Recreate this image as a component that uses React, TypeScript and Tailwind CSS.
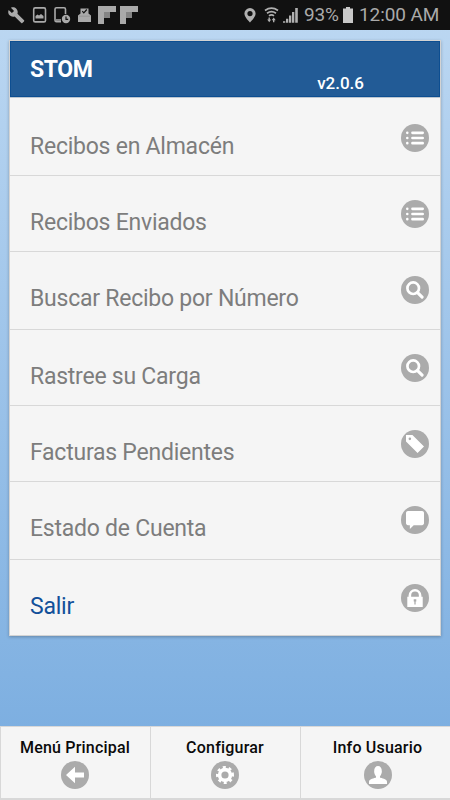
import type { ReactNode } from 'react'

const Disc = ({ children }: { children: ReactNode }) => (
  <span className="flex h-7 w-7 shrink-0 items-center justify-center rounded-full bg-[#ababab]">
    <svg viewBox="0 0 14 14" className="h-[18px] w-[18px]" fill="#fff">
      {children}
    </svg>
  </span>
)

const ListIcon = () => (
  <Disc>
    <path
      d="M5 3H13M5 7H13M5 11H13M1 3H1.01M1 7H1.01M1 11H1.01"
      stroke="#fff"
      strokeWidth="2"
      strokeLinecap="round"
    />
  </Disc>
)

const SearchIcon = () => (
  <Disc>
    <circle cx="5.600" cy="5.600" r="4.500" fill="none" stroke="#fff" strokeWidth="2.100" />
    <path d="M9 9L12.500 12.500" stroke="#fff" strokeWidth="2.400" strokeLinecap="round" />
  </Disc>
)

const TagIcon = () => (
  <Disc>
    <path fillRule="evenodd" d="M5 0H0v5l9 9 5-5L5 0zM3 4a1 1 0 1 1 0-2 1 1 0 0 1 0 2z" />
  </Disc>
)

const CommentIcon = () => (
  <Disc>
    <path d="M12.500 0h-11C.7 0 0 .7 0 1.500v8C0 10.300.7 11 1.500 11H3v3l3-3h6.500c.8 0 1.500-.7 1.500-1.500v-8C14 .7 13.300 0 12.500 0z" />
  </Disc>
)

const LockIcon = () => (
  <Disc>
    <path
      fillRule="evenodd"
      d="M12 6V5A5 5 0 0 0 2 5v1H1v8h12V6zM4 6V5a3 3 0 0 1 6 0v1zM6.500 12V9.800H6V8h2v1.800h-.5V12z"
    />
  </Disc>
)

const ArrowIcon = () => (
  <Disc>
    <path d="M7 5V.5L0 7l7 6.500V9h7V5z" />
  </Disc>
)

const GearIcon = () => (
  <Disc>
    <circle cx="7" cy="7" r="4.200" fill="none" stroke="#fff" strokeWidth="2.800" />
    <circle
      cx="7"
      cy="7"
      r="6"
      fill="none"
      stroke="#fff"
      strokeWidth="2"
      pathLength="16"
      strokeDasharray="1 1"
      strokeDashoffset="0.5"
    />
  </Disc>
)

const UserIcon = () => (
  <Disc>
    <path d="M8.900 9.200c-.5-.1-.5-1-.2-1.500.6-.8 1.300-2 1.300-3.500C10 1.500 8.800 0 7 0S4 1.500 4 4.200c0 1.500.6 2.700 1.300 3.500.3.500.3 1.400-.2 1.500C2.500 9.900 0 10.400 0 12.300V14h14v-1.700c0-1.900-2.500-2.400-5.100-3.100z" />
  </Disc>
)

const items = [
  { label: 'Recibos en Almacén', icon: <ListIcon />, height: 'h-[76.5px]' },
  { label: 'Recibos Enviados', icon: <ListIcon />, height: 'h-[76px]' },
  { label: 'Buscar Recibo por Número', icon: <SearchIcon />, height: 'h-[78px]' },
  { label: 'Rastree su Carga', icon: <SearchIcon />, height: 'h-[76px]' },
  { label: 'Facturas Pendientes', icon: <TagIcon />, height: 'h-[76px]' },
  { label: 'Estado de Cuenta', icon: <CommentIcon />, height: 'h-[78px]' },
  { label: 'Salir', icon: <LockIcon />, height: 'h-[75px]', active: true },
]

const tabs = [
  { label: 'Menú Principal', icon: <ArrowIcon /> },
  { label: 'Configurar', icon: <GearIcon /> },
  { label: 'Info Usuario', icon: <UserIcon /> },
]

const StatusBar = () => (
  <div className="flex h-[30px] shrink-0 items-center justify-between bg-[#111] text-[#aaa]">
    <svg viewBox="0 0 150 30" className="h-[30px] w-[150px]" fill="#aaa">
      <path
        transform="translate(7.500 6.500) scale(.73)"
        d="M22.700 19l-9.100-9.100c.9-2.300.4-5-1.500-6.900-2-2-5-2.400-7.400-1.300L9 6 6 9 1.600 4.700C.4 7.100.9 10.100 2.900 12.100c1.900 1.900 4.600 2.400 6.900 1.500l9.100 9.100c.4.4 1 .4 1.400 0l2.300-2.300c.5-.4.5-1.100.1-1.400z"
      />
      <rect x="33.700" y="7.900" width="11.800" height="14" rx="1.500" fill="none" stroke="#aaa" strokeWidth="1.600" />
      <path d="M35.500 18.500v-2.500l2-1.500 1.500 1 2-1.500 2.500 2v2.500z" />
      <path
        d="M61 21.700h-4.500a1.500 1.500 0 0 1-1.500-1.500V9.200a1.500 1.500 0 0 1 1.500-1.500H64a1.500 1.500 0 0 1 1.500 1.500V14M56 20h5"
        fill="none"
        stroke="#aaa"
        strokeWidth="1.600"
      />
      <circle cx="66" cy="19" r="4.200" />
      <path d="M66 16.500V19.300h2.200" fill="none" stroke="#111" strokeWidth="1.200" />
      <path d="M80.500 8.500h8v5l2.500 2V22H78v-6.500l2.500-2z" />
      <path d="M82.300 11.200l1.500 1.600 3-3.300" fill="none" stroke="#111" strokeWidth="1.200" />
      <path d="M79 16.200h11" stroke="#888" strokeWidth=".6" />
      <path d="M98 6h18v6h-6v6h-6v6h-6zM120 6h18v6h-6v6h-6v6h-6z" />
      <path d="M104 12h6v6h-6zM126 12h6v6h-6z" fill="#858585" />
    </svg>
    <div className="flex items-center">
      <svg viewBox="0 0 60 30" className="h-[30px] w-[60px]" fill="#b0b0b0">
        <path
          fillRule="evenodd"
          d="M10 8a5.600 5.600 0 0 0-5.600 5.600C4.400 17.500 10 22.500 10 22.500s5.600-5 5.600-8.900A5.600 5.600 0 0 0 10 8zm0 8.200a2.600 2.600 0 1 1 0-5.200 2.600 2.600 0 0 1 0 5.200z"
        />
        <path
          d="M25 10.500q6.500-4.600 13 0M27 13.200q4.500-3.200 9 0M29 15.900q2.500-1.900 5 0"
          fill="none"
          stroke="#b0b0b0"
          strokeWidth="1.700"
        />
        <path d="M28.500 17.500h1.400v2h1.300l-2 2.700-2-2.700h1.300zM33 22.200h1.400v-2h1.300l-2-2.700-2 2.700H33z" />
        <path d="M43 21.300h2.300v1.500H43zM46 18.800h2.300v4H46zM49 15.500h2.300v7.300H49zM52 12h2.300v10.800H52zM55.200 8h2.600v14.800h-2.600z" />
      </svg>
      <span className="ml-1 w-[38px] pt-px text-[19px] tracking-[-0.2px] whitespace-nowrap">93%</span>
      <svg viewBox="0 0 12 16" className="h-4 w-3" fill="#c8c8c8">
        <path d="M1 1.500h3V0h4v1.500h3V16H1z" />
      </svg>
      <span className="ml-[5px] w-[91px] pt-px text-[19px] tracking-[-0.1px] whitespace-nowrap">12:00 AM</span>
    </div>
  </div>
)

const MenuCard = () => (
  <div className="mx-[9px] mt-[10px] border border-[#d3d3d3] bg-[#f5f5f5] shadow-[0_1px_3px_rgba(0,0,0,0.25)]">
    <header className="flex h-14 justify-between border border-[#0d4e91] bg-[#225b96] pr-[75px] pl-[19px] text-white">
      <h1 className="pt-[10px] text-[23px] leading-9 font-bold tracking-[-0.4px]">STOM</h1>
      <span className="pt-[29px] text-[17px] leading-6 font-medium">v2.0.6</span>
    </header>
    <ul className="border-t border-[#bcc6d0] pt-[1.5px]">
      {items.map((item) => (
        <li
          key={item.label}
          className={`flex items-start justify-between border-b border-[#d8d8d8] pr-[11px] pl-5 last:border-b-0 ${item.height}`}
        >
          <span
            className={`pt-[31px] text-[23px] leading-8 tracking-[-0.24px] ${item.active ? 'text-[#12509a]' : 'text-[#7d7d7d]'}`}
          >
            {item.label}
          </span>
          <span className="pt-6">{item.icon}</span>
        </li>
      ))}
    </ul>
  </div>
)

const BottomNav = () => (
  <nav className="mt-auto flex h-[74px] border-t border-b-2 border-l border-[#d8d8d8] bg-[#f5f5f5]">
    {tabs.map((tab) => (
      <div
        key={tab.label}
        className="flex w-[150px] flex-col items-center border-r border-[#d8d8d8] pt-[9px] pr-px last:w-[149px] last:border-r-0 last:pr-0 last:pl-1"
      >
        <span className="text-[16px] leading-6 font-medium tracking-[0.2px] text-[#0a0a0a]">{tab.label}</span>
        <span className="mt-px">{tab.icon}</span>
      </div>
    ))}
  </nav>
)

export default function App() {
  return (
    <div className="flex h-[800px] w-[450px] flex-col overflow-hidden bg-linear-to-b/srgb from-[#bdd8f2] to-[#77abdf] font-[Roboto,sans-serif]">
      <StatusBar />
      <MenuCard />
      <BottomNav />
    </div>
  )
}
